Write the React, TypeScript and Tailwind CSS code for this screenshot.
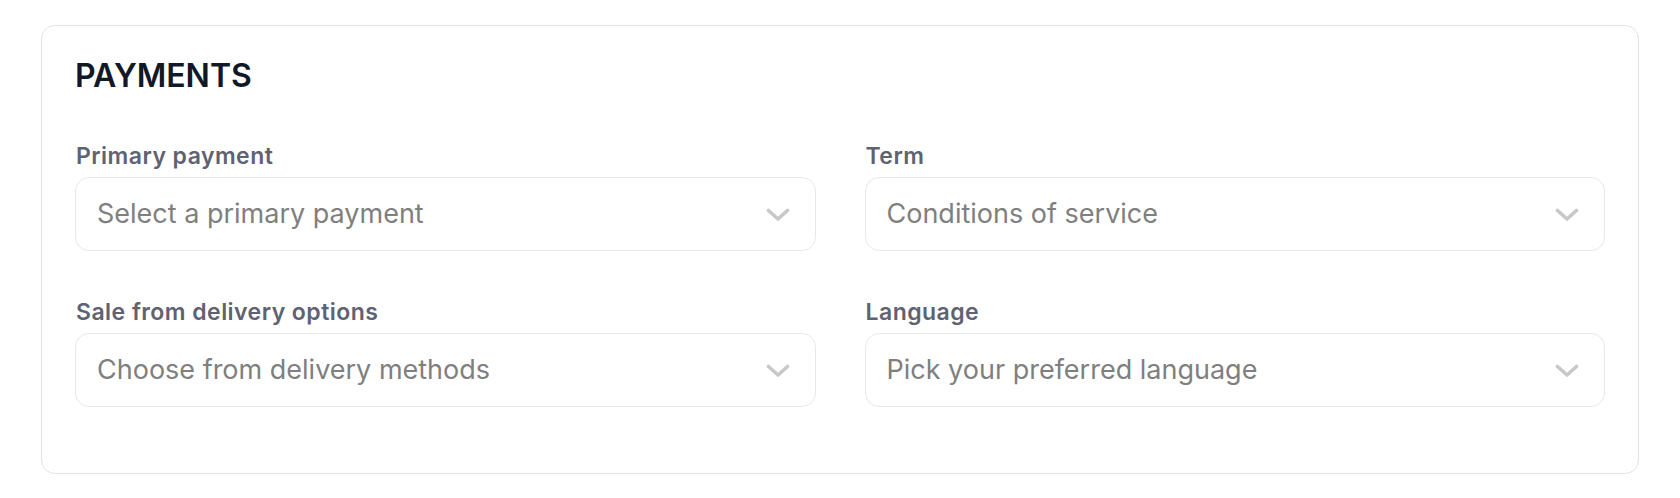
import React from "react";

function Chevron() {
  return (
    <svg width="24" height="14" viewBox="0 0 24 14" fill="none" className="shrink-0">
      <polyline points="2.5,2.5 12,11 21.5,2.5" stroke="#c8c8c8" strokeWidth="3.6" strokeLinecap="round" strokeLinejoin="round" />
    </svg>
  );
}

function Field({ label, placeholder }: { label: string; placeholder: string }) {
  return (
    <div className="flex flex-col gap-[10px]">
      <div className="text-[23px] leading-[22px] font-semibold tracking-[0.02em] text-[#5f6272] pl-[1px]">{label}</div>
      <div className="h-[74px] rounded-[14px] border border-[#e8e8e8] bg-white flex items-center justify-between pl-[21px] pr-[25px] pt-[1px]">
        <span className="text-[27px] text-[#7f7f7f]">{placeholder}</span>
        <Chevron />
      </div>
    </div>
  );
}

export default function App() {
  return (
    <div className="w-[1680px] h-[498px] bg-white px-[41px] pt-[25px]" style={{ fontFamily: "Inter, 'Noto Sans', sans-serif" }}>
      <div className="rounded-[14px] border border-[#e4e4e4] bg-white px-[33px] pt-[34px] pb-[66px]">
        <h2 className="text-[32px] leading-[32px] font-semibold text-[#111827]">PAYMENTS</h2>
        <div className="mt-[53px] grid grid-cols-2 gap-x-[49px] gap-y-[50px]">
          <Field label="Primary payment" placeholder="Select a primary payment" />
          <Field label="Term" placeholder="Conditions of service" />
          <Field label="Sale from delivery options" placeholder="Choose from delivery methods" />
          <Field label="Language" placeholder="Pick your preferred language" />
        </div>
      </div>
    </div>
  );
}
